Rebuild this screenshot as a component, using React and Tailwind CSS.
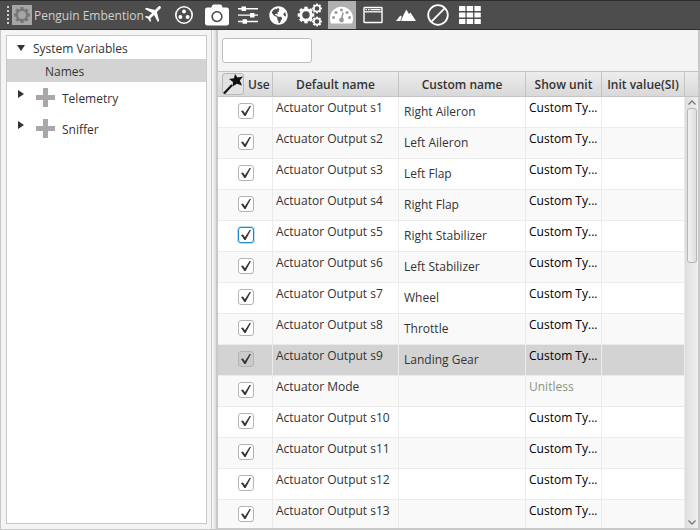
import React, { useState } from "react";
import { FaCamera, FaGlobeAmericas } from "react-icons/fa";
import { MdAirplanemodeActive } from "react-icons/md";

const ROWS = [
  { name: "Actuator Output s1", custom: "Right Aileron", unit: "Custom Ty..." },
  { name: "Actuator Output s2", custom: "Left Aileron", unit: "Custom Ty..." },
  { name: "Actuator Output s3", custom: "Left Flap", unit: "Custom Ty..." },
  { name: "Actuator Output s4", custom: "Right Flap", unit: "Custom Ty..." },
  { name: "Actuator Output s5", custom: "Right Stabilizer", unit: "Custom Ty...", focused: true },
  { name: "Actuator Output s6", custom: "Left Stabilizer", unit: "Custom Ty..." },
  { name: "Actuator Output s7", custom: "Wheel", unit: "Custom Ty..." },
  { name: "Actuator Output s8", custom: "Throttle", unit: "Custom Ty..." },
  { name: "Actuator Output s9", custom: "Landing Gear", unit: "Custom Ty..." },
  { name: "Actuator Mode", custom: "", unit: "Unitless", muted: true },
  { name: "Actuator Output s10", custom: "", unit: "Custom Ty..." },
  { name: "Actuator Output s11", custom: "", unit: "Custom Ty..." },
  { name: "Actuator Output s12", custom: "", unit: "Custom Ty..." },
  { name: "Actuator Output s13", custom: "", unit: "Custom Ty..." },
];

const TEETH = [0, 45, 90, 135, 180, 225, 270, 315];

// one gear wheel, drawn around (cx, cy)
const Gear = ({ cx, cy, r, ring, tooth, color }) => (
  <g transform={`translate(${cx} ${cy})`}>
    <circle r={r - tooth - ring / 2 + 0.3} fill="none" stroke={color} strokeWidth={ring} />
    {TEETH.map((angle) => (
      <rect
        key={angle}
        x={-r * 0.2}
        y={-r}
        width={r * 0.4}
        height={tooth + 0.5}
        fill={color}
        transform={`rotate(${angle})`}
      />
    ))}
  </g>
);

const GearsIcon = () => (
  <svg width="26" height="24" viewBox="0 0 26 24">
    <Gear cx={9} cy={12} r={8.3} ring={3} tooth={1.9} color="#fff" />
    <Gear cx={20} cy={5.5} r={4.9} ring={1.7} tooth={1.2} color="#fff" />
    <Gear cx={20} cy={18.5} r={4.9} ring={1.7} tooth={1.2} color="#fff" />
  </svg>
);

const ConnectorIcon = () => (
  <svg width="20" height="20" viewBox="0 0 20 20" fill="none">
    <circle cx="10" cy="10" r="8.2" stroke="#fff" strokeWidth="1.6" />
    <circle cx="10" cy="6.6" r="2" fill="#fff" />
    <circle cx="6.4" cy="12" r="2" fill="#fff" />
    <circle cx="13.6" cy="12" r="2" fill="#fff" />
  </svg>
);

const SlidersIcon = () => (
  <svg width="20" height="20" viewBox="0 0 20 20" fill="#fff">
    <path d="M0 3h20v1.4H0zM0 9.4h20v1.4H0zM0 15.8h20v1.4H0z" />
    <path d="M3.5 1.6h4.5v4.4h-4.5zM12 8h4.5v4.4h-4.5zM4.5 14.3h4.5v4.4h-4.5z" />
  </svg>
);

const GaugeIcon = () => (
  <svg width="24" height="20" viewBox="0 0 24 20">
    <path d="M1 18.5C.3 17 0 15 0 13.2A11.5 11.5 0 0 1 23 13.2C23 15 22.7 17 22 18.5z" fill="#fff" />
    <g fill="#999">
      <circle cx="3.5" cy="12.5" r="1.5" />
      <circle cx="6" cy="7.5" r="1.5" />
      <circle cx="11.5" cy="5" r="1.5" />
      <circle cx="17" cy="7.5" r="1.5" />
      <circle cx="19.5" cy="12.5" r="1.5" />
      <circle cx="11.5" cy="15" r="2.4" />
    </g>
    <path d="M11.5 15l1.5-7.5" stroke="#999" strokeWidth="1.5" />
  </svg>
);

const WindowIcon = () => (
  <svg width="20" height="18" viewBox="0 0 20 18" fill="none" stroke="#fff">
    <rect x="1" y="1.5" width="18" height="15" rx="0.5" strokeWidth="1.4" />
    <path d="M1 5.8h18" strokeWidth="1.3" />
    <path d="M2.5 3.6h1.5M5 3.6h1.5M7.5 3.6h10" strokeWidth="1.2" />
  </svg>
);

const TerrainIcon = () => (
  <svg width="20" height="12" viewBox="0 0 20 12" fill="#fff">
    <path d="M0 12L4.3 6.5L5.8 7.8L4.3 12z" />
    <path d="M5 12L7 7L10.3 0.5L13 5L14.5 3.5L20 12z" />
  </svg>
);

const BanIcon = () => (
  <svg width="22" height="22" viewBox="0 0 22 22" fill="none" stroke="#fff" strokeWidth="1.8">
    <circle cx="11" cy="11" r="9.8" />
    <path d="M4.2 17.8L17.8 4.2" />
  </svg>
);

const GridIcon = () => (
  <svg width="22" height="18" viewBox="0 0 22 18" fill="#fff">
    {[0, 6.5, 13].map((y) =>
      [0, 7.7, 15.4].map((x) => (
        <rect key={`${x}-${y}`} x={x} y={y} width="6.4" height="5" rx="0.5" />
      ))
    )}
  </svg>
);

const TOOLS = [
  { label: "Vehicle", width: "w-7 pb-1", icon: <MdAirplanemodeActive className="size-[22px] rotate-45" /> },
  { label: "Connections", width: "w-8", icon: <ConnectorIcon /> },
  { label: "Camera", width: "w-[34px]", icon: <FaCamera className="size-6" /> },
  { label: "Settings", width: "w-7", icon: <SlidersIcon /> },
  { label: "Map", width: "w-8", icon: <FaGlobeAmericas className="size-[19px]" /> },
  { label: "Setup", width: "w-8", icon: <GearsIcon /> },
  { label: "Variables", width: "w-7 mx-0.5 bg-[#b0b0b0]", icon: <GaugeIcon /> },
  { label: "Window", width: "w-[30px]", icon: <WindowIcon /> },
  { label: "Terrain", width: "w-9", icon: <TerrainIcon /> },
  { label: "Disable", width: "w-7", icon: <BanIcon /> },
  { label: "Grid", width: "w-9", icon: <GridIcon /> },
];

const Toolbar = () => (
  <header className="flex h-[30px] shrink-0 items-center border-y border-[#2e2e2e] bg-[#4d4d4d] pl-[7px] text-white">
    <div className="mr-[3px] flex flex-col gap-0.5">
      <span className="size-0.5 bg-[#cfcfcf]" />
      <span className="size-0.5 bg-[#cfcfcf]" />
      <span className="size-0.5 bg-[#cfcfcf]" />
      <span className="size-0.5 bg-[#cfcfcf]" />
      <span className="size-0.5 bg-[#cfcfcf]" />
    </div>
    <button type="button" className="flex h-5 items-center whitespace-nowrap text-[#d0d0d0]">
      <span className="flex size-5 items-center justify-center bg-[#a6a6a6]">
        <svg width="18" height="18" viewBox="0 0 18 18">
          <Gear cx={9} cy={9} r={8} ring={2.4} tooth={2} color="#777" />
        </svg>
      </span>
      <span className="w-[108px] pl-0.5 pt-0.5 text-left">Penguin Embention</span>
    </button>
    {TOOLS.map((tool) => (
      <button
        key={tool.label}
        type="button"
        aria-label={tool.label}
        className={`flex h-7 shrink-0 items-center justify-center ${tool.width}`}
      >
        {tool.icon}
      </button>
    ))}
  </header>
);

const PlusIcon = () => (
  <svg width="19" height="19" viewBox="0 0 19 19" fill="#aba7a8">
    <path d="M7 0h5v7h7v5h-7v7H7v-7H0V7h7z" />
  </svg>
);

const TreeBranch = ({ label }) => (
  <li>
    <button type="button" className="flex h-[31px] w-full items-center pl-[11px] text-left">
      <svg width="6" height="8" viewBox="0 0 6 8" className="mb-2 mr-3" fill="#333">
        <path d="M0 0L6 4L0 8z" />
      </svg>
      <PlusIcon />
      <span className="pl-[7px] pt-0.5">{label}</span>
    </button>
  </li>
);

const Sidebar = () => (
  <aside className="flex w-[211px] shrink-0 border-r border-[#c8c8c8] p-[5px] pr-1">
    <ul className="flex-1 border border-[#c8c8c8] bg-white">
      <li>
        <button type="button" className="flex h-[23px] w-full items-center pl-2.5 text-left">
          <svg width="8" height="6" viewBox="0 0 8 6" className="mr-2" fill="#333">
            <path d="M0 0H8L4 6z" />
          </svg>
          <span className="pt-0.5">System Variables</span>
        </button>
      </li>
      <li>
        <button type="button" className="flex h-[23px] w-full items-center bg-[#d3d3d3] pl-[38px] text-left">
          <span className="pt-0.5">Names</span>
        </button>
      </li>
      <TreeBranch label="Telemetry" />
      <TreeBranch label="Sniffer" />
    </ul>
  </aside>
);

const UseCheckbox = ({ label, focused, selected }) => (
  <label className="ml-5 grid size-4 place-items-center">
    <input
      type="checkbox"
      defaultChecked
      aria-label={label}
      className={`peer col-start-1 row-start-1 size-4 appearance-none rounded-[3px] border ${
        focused
          ? "border-[#1e8ac9] bg-white ring-1 ring-[#b5dff5]"
          : selected
          ? "border-[#b4b4b4] bg-[#cbcbcb]"
          : "border-[#b4b4b4] bg-white"
      }`}
    />
    <svg
      width="10"
      height="10"
      viewBox="0 0 10 10"
      className="pointer-events-none col-start-1 row-start-1 hidden peer-checked:block"
      fill="#333"
    >
      <path d="M0 5L2 4.5L3.9 7.2L8.6 0H10L4.6 10H3.4z" />
    </svg>
  </label>
);

const WandIcon = () => (
  <svg width="20" height="20" viewBox="0 0 20 20" fill="#111">
    <path d="M1 19.5L9 11" stroke="#111" strokeWidth="2.2" />
    <path d="M12 0L14.5 3.5L20 2.5L16.8 6.5L19 11.5L14 9.8L9.5 12.5L10 8L6 5L11 4.2z" />
  </svg>
);

const HEAD_CELL =
  "h-[26px] border-y border-r border-[#c3c3c3] bg-linear-to-b from-[#ededed] to-[#d8d8d8] p-0 font-semibold";
const CELL = "border-b border-r border-[#ebebeb] p-0 align-top";

const VariablesTable = ({ selected, onSelect }) => (
  <table className="w-full table-fixed border-separate border-spacing-0 whitespace-nowrap">
    <colgroup>
      <col className="w-[55px]" />
      <col className="w-[126px]" />
      <col className="w-[127px]" />
      <col className="w-[76px]" />
      <col />
    </colgroup>
    <thead>
      <tr>
        <th className={HEAD_CELL}>
          <div className="flex items-center pl-1">
            <button
              type="button"
              aria-label="Auto select"
              className="flex size-[22px] items-center justify-center rounded-[3px] border border-[#b8b8b8] bg-[#e2e2e2]"
            >
              <WandIcon />
            </button>
            <span className="pl-1 pt-0.5">Use</span>
          </div>
        </th>
        <th className={`${HEAD_CELL} pt-0.5`}>Default name</th>
        <th className={`${HEAD_CELL} pt-0.5`}>Custom name</th>
        <th className={`${HEAD_CELL} pt-0.5`}>Show unit</th>
        <th className={`${HEAD_CELL} pt-0.5`}>Init value(SI)</th>
      </tr>
    </thead>
    <tbody>
      {ROWS.map((row) => (
        <tr
          key={row.name}
          onClick={() => onSelect(row.name)}
          className={`h-[31px] ${row.name === selected ? "bg-[#d3d3d3]" : "bg-white even:bg-[#f9f9f9]"}`}
        >
          <td className={`${CELL} pt-1.5`}>
            <UseCheckbox label={`Use ${row.name}`} focused={row.focused} selected={row.name === selected} />
          </td>
          <td className={`${CELL} pl-[3px] pt-0.5`}>{row.name}</td>
          <td className={`${CELL} pl-[5px] pt-1.5`}>{row.custom}</td>
          <td className={`${CELL} pl-[3px] pt-0.5 ${row.muted ? "text-[#8a9580]" : "text-black"}`}>{row.unit}</td>
          <td className={CELL} />
        </tr>
      ))}
    </tbody>
  </table>
);

const ScrollBar = () => (
  <div className="flex w-[13px] shrink-0 flex-col">
    <div className="h-[26px] shrink-0 border-y border-[#c3c3c3] bg-linear-to-b from-[#ededed] to-[#d8d8d8]" />
    <div className="flex flex-1 flex-col items-center border-l border-[#dcdcdc] bg-linear-to-r from-[#e0e0e0] to-[#efefef]">
      <button type="button" aria-label="Scroll up" className="flex h-[11px] items-center">
        <svg width="8" height="5" viewBox="0 0 8 5" fill="none" stroke="#777" strokeWidth="1.3">
          <path d="M0.5 4.5L4 1L7.5 4.5" />
        </svg>
      </button>
      <div className="h-[155px] w-2.5 rounded-[3px] border border-[#b5b5b5] bg-linear-to-r from-[#f2f2f2] to-[#dedede]" />
      <button type="button" aria-label="Scroll down" className="mt-auto flex h-[11px] items-center">
        <svg width="8" height="5" viewBox="0 0 8 5" fill="none" stroke="#777" strokeWidth="1.3">
          <path d="M0.5 0.5L4 4L7.5 0.5" />
        </svg>
      </button>
    </div>
  </div>
);

export default function App() {
  const [filter, setFilter] = useState("");
  const [selected, setSelected] = useState("Actuator Output s9");

  return (
    <div className="flex h-screen flex-col overflow-hidden bg-[#f4f4f4] font-['Open_Sans','Noto_Sans',sans-serif] text-xs leading-[18px] text-[#333]">
      <Toolbar />
      <div className="flex min-h-0 flex-1 border-b border-l border-[#c8c8c8]">
        <Sidebar />
        <div className="w-1 shrink-0 bg-linear-to-r from-[#fafafa] to-[#dcdcdc]" />
        <main className="flex min-w-0 flex-1 flex-col border-x-2 border-b border-[#c8c8c8]">
          <div className="flex h-[41px] shrink-0 items-center px-1">
            <input
              type="text"
              aria-label="Filter variables"
              value={filter}
              onChange={(e) => setFilter(e.target.value)}
              className="h-[25px] w-[90px] rounded-[3px] border border-[#bdbdbd] bg-white px-1.5"
            />
          </div>
          <div className="flex min-h-0 flex-1">
            <div className="min-w-0 flex-1 overflow-hidden">
              <VariablesTable selected={selected} onSelect={setSelected} />
            </div>
            <ScrollBar />
          </div>
        </main>
      </div>
    </div>
  );
}
